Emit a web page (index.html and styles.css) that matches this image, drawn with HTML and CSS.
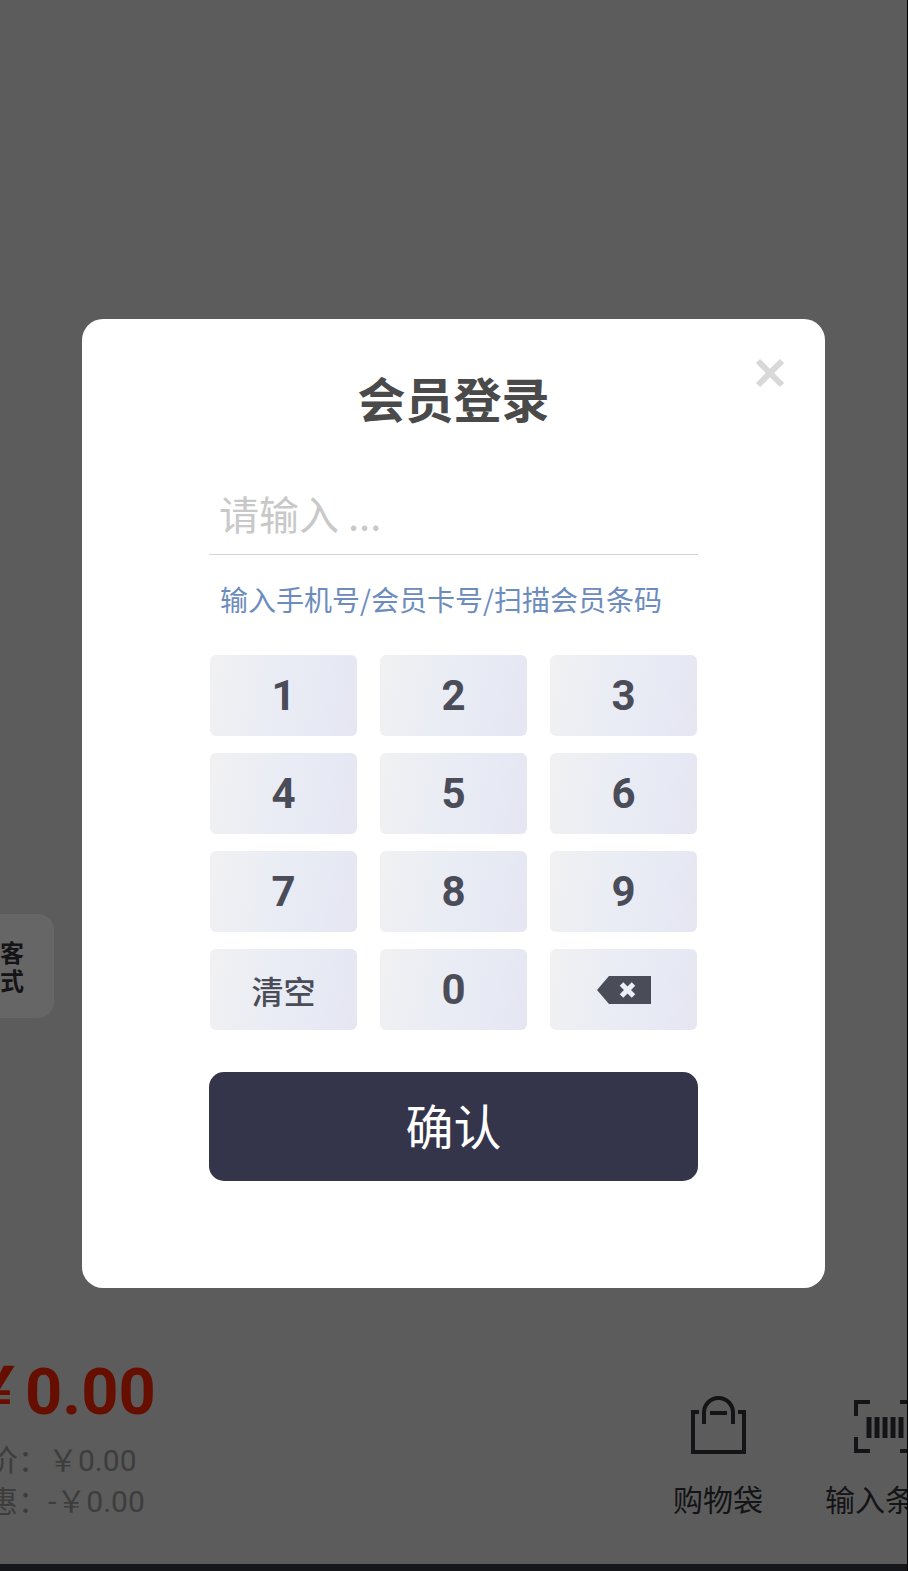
FILE: index.html
```html
<!DOCTYPE html>
<html lang="zh-CN">
<head>
  <meta charset="UTF-8">
  <meta name="viewport" content="width=device-width, initial-scale=1.0">
  <title>会员登录</title>
  <link rel="stylesheet" href="styles.css">
</head>
<body>
  <div class="page">
    <main class="main">
      <button type="button" class="mode">客<br>式</button>
    </main>

    <footer class="footer">
      <div class="totals">
        <div class="total">￥0.00</div>
        <div class="total-line">价：￥0.00</div>
        <div class="total-line">惠：-￥0.00</div>
      </div>
      <div class="actions">
        <button type="button" class="action">
          <svg width="64" height="64" viewBox="0 0 64 64" fill="none" stroke="currentColor" stroke-width="4">
            <path d="M13 20H7V60H58V20H52"/>
            <path d="M18 32V20.500a14.500 14.500 0 0 1 29 0V32"/>
            <path d="M24 21H41"/>
          </svg>
          <span>购物袋</span>
        </button>
        <button type="button" class="action">
          <svg width="64" height="64" viewBox="0 0 64 64" fill="none" stroke="currentColor" stroke-width="4">
            <path d="M17 10H3V24M47 10H61V24M3 45V59H17M61 45V59H47"/>
            <path d="M16 25V46M24 25V46M32 25V46M40 25V46M48 25V46" stroke-width="5"/>
          </svg>
          <span>输入条码</span>
        </button>
      </div>
    </footer>
    <div class="bar"></div>

    <!-- Login Dialog -->
    <div class="overlay">
      <form class="dialog" id="loginForm">
        <button type="button" class="close" aria-label="关闭">
          <svg width="32" height="32" viewBox="0 0 32 32" fill="none" stroke="currentColor" stroke-width="6">
            <path d="M4 4L28 28M28 4L4 28"/>
          </svg>
        </button>
        <h1>会员登录</h1>
        <input type="text" id="account" name="account" placeholder="请输入 ...">
        <label for="account">输入手机号/会员卡号/扫描会员条码</label>

        <div class="keypad">
          <button type="button" class="key">1</button>
          <button type="button" class="key">2</button>
          <button type="button" class="key">3</button>
          <button type="button" class="key">4</button>
          <button type="button" class="key">5</button>
          <button type="button" class="key">6</button>
          <button type="button" class="key">7</button>
          <button type="button" class="key">8</button>
          <button type="button" class="key">9</button>
          <button type="button" class="key key-clear">清空</button>
          <button type="button" class="key">0</button>
          <button type="button" class="key key-delete" aria-label="删除">
            <svg width="54" height="28" viewBox="0 0 54 28">
              <path d="M0 14L12 0H54V28H12Z" fill="currentColor"/>
              <path d="M24.500 8L36.500 20M36.500 8L24.500 20" stroke="#eeeef8" stroke-width="5"/>
            </svg>
          </button>
        </div>

        <button type="submit" class="confirm">确认</button>
      </form>
    </div>
  </div>

  <script>
    const account = document.getElementById("account");

    document.querySelectorAll(".key").forEach(function (key) {
      key.addEventListener("click", function () {
        if (key.classList.contains("key-clear")) {
          account.value = "";
        } else if (key.classList.contains("key-delete")) {
          account.value = account.value.slice(0, -1);
        } else {
          account.value += key.textContent;
        }
      });
    });

    document.getElementById("loginForm").addEventListener("submit", function (event) {
      event.preventDefault();
    });
  </script>
</body>
</html>
```
FILE: styles.css
```css
* {
  box-sizing: border-box;
}

body {
  margin: 0;
  font-family: "Noto Sans CJK SC", sans-serif;
}

button {
  padding: 0;
  border: none;
  background: none;
  font-family: inherit;
  cursor: pointer;
}

svg {
  display: block;
}

.page {
  position: relative;
  display: flex;
  flex-direction: column;
  min-height: 100vh;
  border-right: 1px solid #000;
  background-color: #e6e6e6;
  overflow: hidden;
}

.main {
  display: flex;
  flex: 1;
  align-items: flex-end;
  padding-bottom: 322px;
}

.mode {
  width: 54px;
  height: 104px;
  border-radius: 0 16px 16px 0;
  background-color: #fff;
  color: #333338;
  font-size: 24px;
  font-weight: bold;
  line-height: 28px;
  text-align: left;
}

.footer {
  display: flex;
  justify-content: space-between;
  height: 224px;
}

.totals {
  padding-top: 12px;
  font-family: Roboto, "Noto Sans CJK SC", sans-serif;
  white-space: nowrap;
}

.total {
  margin-bottom: 8px;
  margin-left: -40px;
  color: #ff2600;
  font-size: 65px;
  font-weight: bold;
  line-height: 80px;
}

.total-line {
  margin-left: -12px;
  color: #9a9a9a;
  font-size: 30px;
  line-height: 41px;
}

.actions {
  display: flex;
  align-items: flex-start;
  gap: 62px;
  margin-right: -38px;
  padding-top: 52px;
}

.action {
  display: flex;
  flex-direction: column;
  align-items: center;
  gap: 21px;
  color: #333338;
  font-size: 30px;
  line-height: 42px;
  white-space: nowrap;
}

.bar {
  height: 7px;
  background-color: #35373f;
}

.overlay {
  position: absolute;
  inset: 0;
  display: flex;
  justify-content: center;
  align-items: center;
  padding: 36px 82px 0;
  background-color: rgba(0, 0, 0, 0.6);
}

.dialog {
  position: relative;
  display: flex;
  flex: 1;
  flex-direction: column;
  max-width: 800px;
  padding: 50px 127px 107px;
  border-radius: 21px;
  background-color: #fff;
}

.close {
  position: absolute;
  top: 38px;
  right: 39px;
  color: #d8d8d8;
}

h1 {
  margin: 0;
  color: #4a4a4a;
  font-size: 48px;
  font-weight: bold;
  line-height: 56px;
  text-align: center;
}

input[type="text"] {
  width: 100%;
  height: 80px;
  margin-top: 50px;
  padding: 0 10px 4px;
  border: none;
  border-bottom: 1px solid #d4d4d6;
  color: #4a4a4a;
  font-family: inherit;
  font-size: 40px;
  outline: none;
}

input::placeholder {
  color: #c8c8c8;
}

label {
  margin-top: 24px;
  padding-left: 11px;
  color: #6b8cbd;
  font-size: 28px;
  line-height: 40px;
  white-space: nowrap;
}

.keypad {
  display: grid;
  grid-template-columns: repeat(3, 1fr);
  gap: 17px 23px;
  margin-top: 36px;
  padding: 0 1px;
}

.key {
  display: flex;
  justify-content: center;
  align-items: center;
  height: 81px;
  border-radius: 6px;
  background: linear-gradient(100deg, #f1f1f2, #e9ecf5 50%, #e5e6f2);
  color: #4a4c58;
  font-family: Roboto, sans-serif;
  font-size: 42px;
  font-weight: bold;
}

.key-clear {
  font-family: "Noto Sans CJK SC", sans-serif;
  font-size: 32px;
  font-weight: 500;
}

.confirm {
  height: 109px;
  margin-top: 42px;
  padding-bottom: 5px;
  border-radius: 15px;
  background-color: #34344b;
  color: #fff;
  font-size: 48px;
}
```
